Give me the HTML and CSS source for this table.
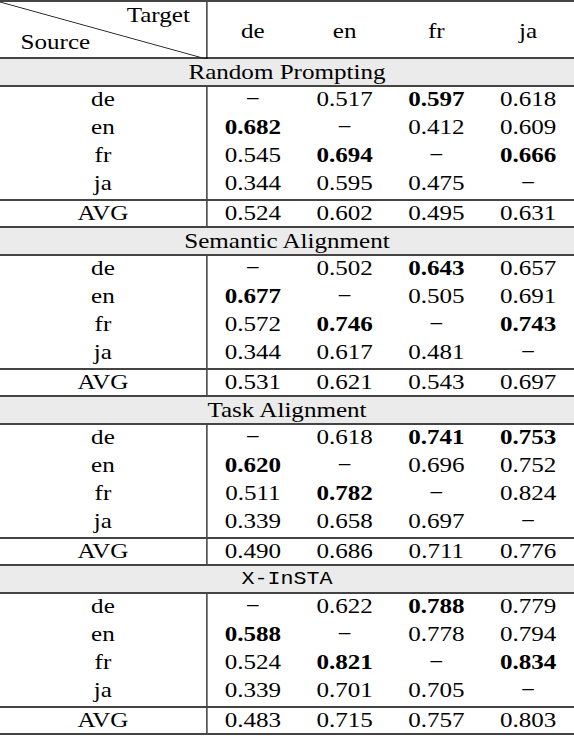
FILE: index.html
```html
<!DOCTYPE html>
<html>
<head>
<meta charset="utf-8">
<link rel="stylesheet" href="styles.css">
</head>
<body>
<div class="table">
  <div class="row head">
    <div class="label corner"><span class="tgt">Target</span><span class="src">Source</span></div>
    <div class="cell">de</div><div class="cell">en</div><div class="cell">fr</div><div class="cell">ja</div>
  </div>

  <div class="band">Random Prompting</div>
  <div class="row"><div class="label">de</div><div class="cell">−</div><div class="cell">0.517</div><div class="cell b">0.597</div><div class="cell">0.618</div></div>
  <div class="row"><div class="label">en</div><div class="cell b">0.682</div><div class="cell">−</div><div class="cell">0.412</div><div class="cell">0.609</div></div>
  <div class="row"><div class="label">fr</div><div class="cell">0.545</div><div class="cell b">0.694</div><div class="cell">−</div><div class="cell b">0.666</div></div>
  <div class="row"><div class="label">ja</div><div class="cell">0.344</div><div class="cell">0.595</div><div class="cell">0.475</div><div class="cell">−</div></div>
  <div class="row avg"><div class="label">AVG</div><div class="cell">0.524</div><div class="cell">0.602</div><div class="cell">0.495</div><div class="cell">0.631</div></div>

  <div class="band">Semantic Alignment</div>
  <div class="row"><div class="label">de</div><div class="cell">−</div><div class="cell">0.502</div><div class="cell b">0.643</div><div class="cell">0.657</div></div>
  <div class="row"><div class="label">en</div><div class="cell b">0.677</div><div class="cell">−</div><div class="cell">0.505</div><div class="cell">0.691</div></div>
  <div class="row"><div class="label">fr</div><div class="cell">0.572</div><div class="cell b">0.746</div><div class="cell">−</div><div class="cell b">0.743</div></div>
  <div class="row"><div class="label">ja</div><div class="cell">0.344</div><div class="cell">0.617</div><div class="cell">0.481</div><div class="cell">−</div></div>
  <div class="row avg"><div class="label">AVG</div><div class="cell">0.531</div><div class="cell">0.621</div><div class="cell">0.543</div><div class="cell">0.697</div></div>

  <div class="band">Task Alignment</div>
  <div class="row"><div class="label">de</div><div class="cell">−</div><div class="cell">0.618</div><div class="cell b">0.741</div><div class="cell b">0.753</div></div>
  <div class="row"><div class="label">en</div><div class="cell b">0.620</div><div class="cell">−</div><div class="cell">0.696</div><div class="cell">0.752</div></div>
  <div class="row"><div class="label">fr</div><div class="cell">0.511</div><div class="cell b">0.782</div><div class="cell">−</div><div class="cell">0.824</div></div>
  <div class="row"><div class="label">ja</div><div class="cell">0.339</div><div class="cell">0.658</div><div class="cell">0.697</div><div class="cell">−</div></div>
  <div class="row avg"><div class="label">AVG</div><div class="cell">0.490</div><div class="cell">0.686</div><div class="cell">0.711</div><div class="cell">0.776</div></div>

  <div class="band mono">X-InSTA</div>
  <div class="row"><div class="label">de</div><div class="cell">−</div><div class="cell">0.622</div><div class="cell b">0.788</div><div class="cell">0.779</div></div>
  <div class="row"><div class="label">en</div><div class="cell b">0.588</div><div class="cell">−</div><div class="cell">0.778</div><div class="cell">0.794</div></div>
  <div class="row"><div class="label">fr</div><div class="cell">0.524</div><div class="cell b">0.821</div><div class="cell">−</div><div class="cell b">0.834</div></div>
  <div class="row"><div class="label">ja</div><div class="cell">0.339</div><div class="cell">0.701</div><div class="cell">0.705</div><div class="cell">−</div></div>
  <div class="row avg"><div class="label">AVG</div><div class="cell">0.483</div><div class="cell">0.715</div><div class="cell">0.757</div><div class="cell">0.803</div></div>
</div>
</body>
</html>
```
FILE: styles.css
```css
html, body {
  margin: 0;
  padding: 0;
  background: #fff;
}

.table {
  width: 503.5px;
  transform: scaleX(1.14);
  transform-origin: 0 0;
  font-family: "Liberation Serif", serif;
  font-size: 22px;
  color: #000;
  border-top: 2px solid #444;
}

.row {
  display: grid;
  grid-template-columns: 181.6px repeat(4, 1fr);
  height: 28px;
  box-sizing: border-box;
  line-height: 24px;
}

.label,
.cell {
  text-align: center;
}

.label {
  border-right: 1px solid #000;
}

.b {
  font-weight: bold;
}

.head {
  height: 57px;
  border-bottom: 2px solid #444;
  line-height: 57px;
}

.corner {
  display: flex;
  flex-direction: column;
  line-height: 24px;
  background: linear-gradient(to top right, transparent calc(50% - 0.9px), #222 50%, transparent calc(50% + 0.9px));
}

.tgt {
  align-self: flex-end;
  padding: 1px 14px 0 0;
}

.src {
  align-self: flex-start;
  padding: 3px 0 0 18px;
}

.band {
  height: 28px;
  box-sizing: border-box;
  background: #ebebeb;
  border-bottom: 2px solid #444;
  text-align: center;
  line-height: 26px;
}

.mono {
  font-family: "Liberation Mono", monospace;
  font-size: 19px;
}

.avg {
  height: 29px;
  border-top: 2px solid #444;
  border-bottom: 2px solid #444;
  line-height: 23px;
}
```
